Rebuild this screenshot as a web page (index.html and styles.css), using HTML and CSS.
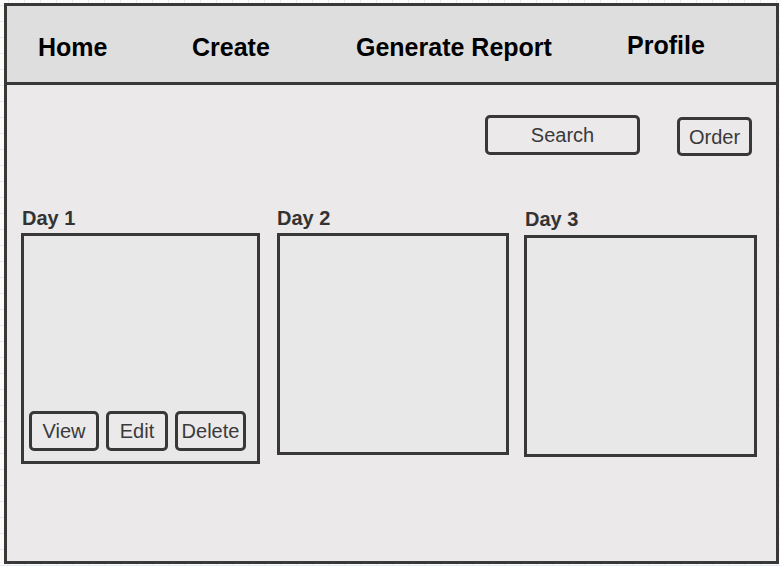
FILE: index.html
```html
<!DOCTYPE html>
<html>
<head>
<meta charset="utf-8">
<title>Days</title>
<link rel="stylesheet" href="styles.css">
</head>
<body>
<div class="frame">
  <nav class="header">
    <span class="nav-item">Home</span>
    <span class="nav-item">Create</span>
    <span class="nav-item">Generate Report</span>
    <span class="nav-item profile">Profile</span>
  </nav>
  <main class="main">
    <div class="toolbar">
      <div class="btn search">Search</div>
      <div class="btn order">Order</div>
    </div>
    <div class="days">
      <section class="day day1">
        <h2 class="day-label">Day 1</h2>
        <div class="day-box box1">
          <div class="actions">
            <div class="btn small view">View</div>
            <div class="btn small edit">Edit</div>
            <div class="btn small delete">Delete</div>
          </div>
        </div>
      </section>
      <section class="day day2">
        <h2 class="day-label">Day 2</h2>
        <div class="day-box box2"></div>
      </section>
      <section class="day day3">
        <h2 class="day-label">Day 3</h2>
        <div class="day-box box3"></div>
      </section>
    </div>
  </main>
</div>
</body>
</html>
```

FILE: styles.css
```css
* { box-sizing: border-box; }

html, body {
  margin: 0;
  padding: 0;
  width: 780px;
  height: 566px;
  overflow: hidden;
}

body {
  font-family: "Liberation Sans", Arial, sans-serif;
  background-color: #fdfbf8;
  background-image:
    linear-gradient(to right, #e2eaf5 1px, transparent 1px),
    linear-gradient(to bottom, #e2eaf5 1px, transparent 1px);
  background-size: 16px 16px;
  background-position: 8px 5px;
  padding-top: 3px;
  padding-left: 4px;
}

.frame {
  width: 775px;
  height: 561px;
  border: 3px solid #383838;
  background: #ebe9e9;
  display: flex;
  flex-direction: column;
}

.header {
  height: 79px;
  flex: none;
  background: #dedede;
  border-bottom: 3px solid #383838;
  display: grid;
  grid-template-columns: 154px 164px 271px auto;
  align-items: start;
  padding-left: 31px;
  padding-top: 29px;
}

.nav-item {
  font-size: 25px;
  font-weight: bold;
  line-height: 24px;
  color: #000;
  white-space: nowrap;
}

.nav-item.profile { margin-top: -2px; }

.main {
  flex: 1;
  display: flex;
  flex-direction: column;
}

.toolbar {
  display: flex;
  justify-content: flex-end;
  align-items: flex-start;
  gap: 37px;
  padding-top: 30px;
  padding-right: 24px;
}

.btn {
  border: 3px solid #383838;
  border-radius: 5px;
  display: flex;
  align-items: center;
  justify-content: center;
  font-size: 20px;
  line-height: 20px;
  color: #3a3a3a;
  background: #ebe9e9;
  white-space: nowrap;
}

.search { width: 155px; height: 40px; padding-bottom: 1px; }
.order { width: 75px; height: 39px; margin-top: 2px; }

.days {
  display: flex;
  align-items: flex-start;
  padding-left: 14px;
  padding-top: 52px;
}

.day-label {
  margin: 0 0 5px 1px;
  font-size: 20px;
  line-height: 20px;
  font-weight: bold;
  color: #333;
}

.day-box {
  border: 3px solid #383838;
  background: #e8e8e8;
}

.day1 { width: 239px; }
.day2 { width: 232px; margin-left: 17px; }
.day3 { width: 233px; margin-left: 15px; padding-top: 1px; }
.day2 .day-label { margin-left: 0; }
.day3 .day-label { margin-bottom: 6px; }

.box1 { height: 231px; display: flex; flex-direction: column; justify-content: flex-end; padding: 0 0 10px 5px; }
.box2 { height: 222px; }
.box3 { height: 222px; }

.actions {
  display: flex;
  gap: 7px;
}

.small { height: 40px; }
.view { width: 70px; }
.edit { width: 62px; }
.delete { width: 71px; }
```
